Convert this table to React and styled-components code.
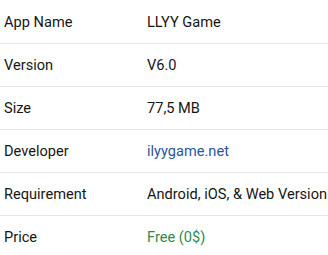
import styled, {createGlobalStyle} from 'styled-components';

const GlobalStyle = createGlobalStyle`
  body {
    margin: 0;
    background: #ffffff;
    font-family: Roboto, "Liberation Sans", Arial, sans-serif;
  }
`;

const Table = styled.table`
  width: 100%;
  table-layout: fixed;
  border-collapse: collapse;
  font-size: 14.6px;
  line-height: 17px;
  color: #161616;
`;

const Row = styled.tr`
  height: 43px;
  border-bottom: ${props => props.$last ? 'none' : '1px solid #e6e6e6'};
`;

const Label = styled.td`
  width: 143px;
  padding: 1.5px 0 0 4px;
  vertical-align: middle;
`;

const Value = styled.td`
  padding: 1.5px 0 0 0;
  vertical-align: middle;
  white-space: nowrap;
  color: ${props => props.$tone === 'link' ? '#2b5797' : props.$tone === 'free' ? '#2e8b4f' : '#161616'};
`;

const rows = [
    {label: 'App Name', value: 'LLYY Game'},
    {label: 'Version', value: 'V6.0'},
    {label: 'Size', value: '77,5 MB'},
    {label: 'Developer', value: 'ilyygame.net', tone: 'link'},
    {label: 'Requirement', value: 'Android, iOS, & Web Version'},
    {label: 'Price', value: 'Free (0$)', tone: 'free'},
];

function App() {
    return (
        <>
            <GlobalStyle />
            <Table>
                <tbody>
                    {rows.map((r, i) => (
                        <Row key={r.label} $last={i === rows.length - 1}>
                            <Label>{r.label}</Label>
                            <Value $tone={r.tone}>{r.value}</Value>
                        </Row>
                    ))}
                </tbody>
            </Table>
        </>
    );
}

export default App;
